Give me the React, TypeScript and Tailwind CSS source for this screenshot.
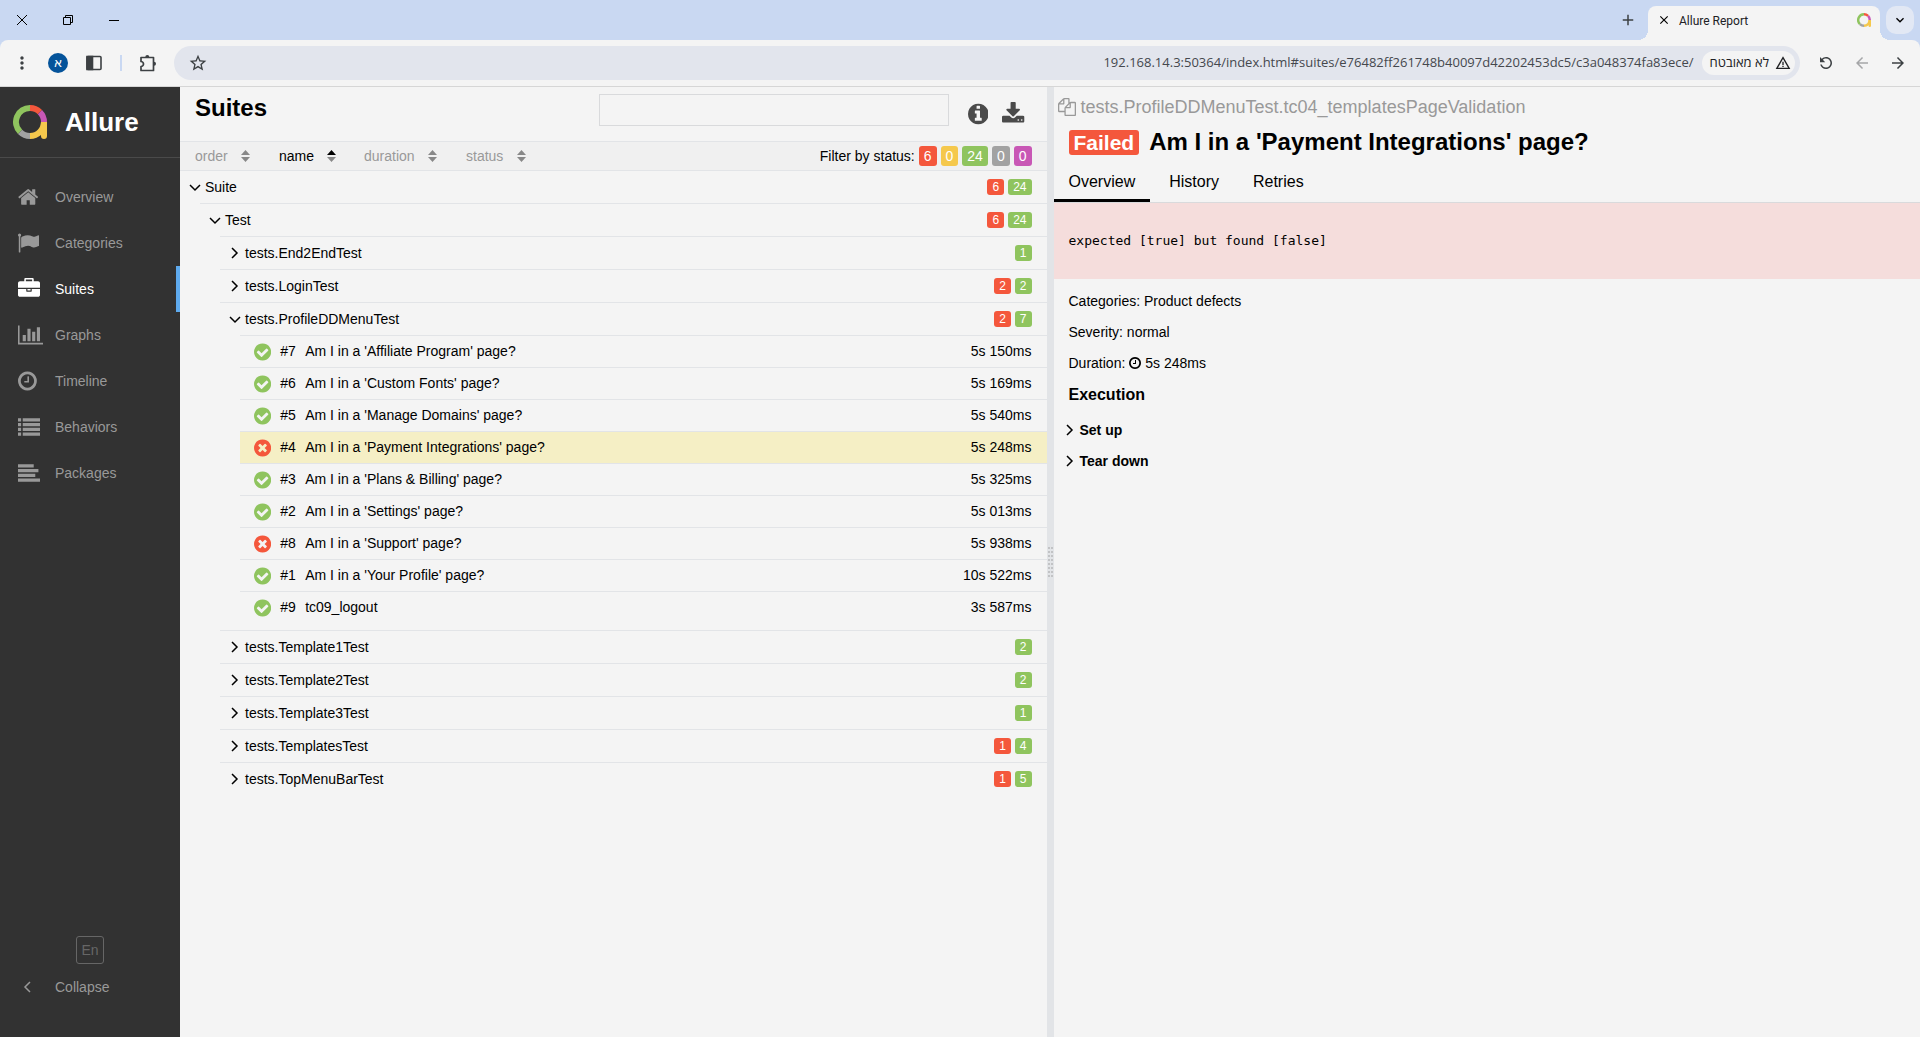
import React from "react";
import {
  MdAdd,
  MdArrowBack,
  MdArrowForward,
  MdClose,
  MdExpandMore,
  MdMoreVert,
  MdRefresh,
  MdStarBorder,
  MdWarningAmber,
} from "react-icons/md";

const RING =
  "q0 209-103 385.5t-279.5 279.5-385.5 103-385.5-103-279.5-279.5-103-385.5 103-385.5 279.5-279.5 385.5-103 385.5 103 279.5 279.5 103 385.5z";

const GLYPHS = {
  home: {
    box: "64 0 1664 1792",
    d: "M1472 992v480q0 26-19 45t-45 19h-384v-384h-256v384h-384q-26 0-45-19t-19-45v-480q0-1 .5-3t.5-3l575-474 575 474q1 2 1 6zm223-69l-62 74q-8 9-21 11h-3q-13 0-21-7l-692-577-692 577q-12 8-24 7-13-2-21-11l-62-74q-8-10-7-23.5t11-21.5l719-599q32-26 76-26t76 26l244 204v-195q0-14 9-23t23-9h192q14 0 23 9t9 23v408l219 182q10 8 11 21.5t-7 23.5z",
  },
  flag: {
    box: "192 0 1728 1792",
    d: "M448 256q0 72-64 110v1266q0 13-9.5 22.5t-22.5 9.5h-64q-13 0-22.5-9.5t-9.5-22.5v-1266q-64-38-64-110 0-53 37.5-90.5t90.5-37.5 90.5 37.5 37.5 90.5zm1472 64v763q0 25-12.5 38.5t-39.5 27.5q-215 116-369 116-61 0-123.5-22t-108.5-48-115.5-48-142.5-22q-192 0-464 146-17 9-33 9-26 0-45-19t-19-45v-742q0-32 31-55 21-14 79-43 236-120 421-120 107 0 200 29t219 88q38 19 88 19 54 0 117.5-21t110-47 88-47 54.5-21q26 0 45 19t19 45z",
  },
  briefcase: {
    box: "0 0 1792 1792",
    d: "M640 256h512v-128h-512v128zm1152 640v480q0 66-47 113t-113 47h-1472q-66 0-113-47t-47-113v-480h672v160q0 26 19 45t45 19h320q26 0 45-19t19-45v-160h672zm-768 0v128h-256v-128h256zm768-480v384h-1792v-384q0-66 47-113t113-47h352v-160q0-40 28-68t68-28h576q40 0 68 28t28 68v160h352q66 0 113 47t47 113z",
  },
  chart: {
    box: "0 0 2048 1792",
    d: "M640 896v512h-256v-512h256zm384-512v1024h-256v-1024h256zm1024 1152v128h-2048v-1536h128v1408h1920zm-640-896v768h-256v-768h256zm384-384v1152h-256v-1152h256z",
  },
  clock: {
    box: "128 0 1536 1792",
    d:
      "M1024 544v448q0 14-9 23t-23 9h-320q-14 0-23-9t-9-23v-64q0-14 9-23t23-9h224v-352q0-14 9-23t23-9h64q14 0 23 9t9 23zm416 352q0-148-73-273t-198-198-273-73-273 73-198 198-73 273 73 273 198 198 273 73 273-73 198-198 73-273zm224 0" +
      RING,
  },
  list: {
    box: "0 0 1792 1792",
    d: "M0 192h256v256h-256zM384 192h1408v256h-1408zM0 576h256v256h-256zM384 576h1408v256h-1408zM0 960h256v256h-256zM384 960h1408v256h-1408zM0 1344h256v256h-256zM384 1344h1408v256h-1408z",
  },
  align: {
    box: "0 0 1792 1792",
    d: "M0 192h1280v256h-1280zM0 576h1664v256h-1664zM0 960h1408v256h-1408zM0 1344h1792v256h-1792z",
  },
  check: {
    box: "128 0 1536 1792",
    d:
      "M1412 734q0-28-18-46l-91-90q-19-19-45-19t-45 19l-408 407-226-226q-19-19-45-19t-45 19l-91 90q-18 18-18 46 0 27 18 45l362 362q19 19 45 19 27 0 46-19l543-543q18-18 18-45zm252 162" +
      RING,
  },
  times: {
    box: "128 0 1536 1792",
    d:
      "M1277 1122q0-26-19-45l-181-181 181-181q19-19 19-45 0-27-19-46l-90-90q-19-19-46-19-26 0-45 19l-181 181-181-181q-19-19-45-19-27 0-46 19l-90 90q-19 19-19 46 0 26 19 45l181 181-181 181q-19 19-19 45 0 27 19 46l90 90q19 19 46 19 26 0 45-19l181-181 181 181q19 19 45 19 27 0 46-19l90-90q19-19 19-46zm387-226" +
      RING,
  },
  info: {
    box: "128 0 1536 1792",
    d:
      "M1152 1376v-160q0-14-9-23t-23-9h-96v-512q0-14-9-23t-23-9h-320q-14 0-23 9t-9 23v160q0 14 9 23t23 9h96v320h-96q-14 0-23 9t-9 23v160q0 14 9 23t23 9h448q14 0 23-9t9-23zm-128-896v-160q0-14-9-23t-23-9h-192q-14 0-23 9t-9 23v160q0 14 9 23t23 9h192q14 0 23-9t9-23zm640 416" +
      RING,
  },
  download: {
    box: "64 0 1664 1792",
    d: "M1344 1344q0-26-19-45t-45-19-45 19-19 45 19 45 45 19 45-19 19-45zm256 0q0-26-19-45t-45-19-45 19-19 45 19 45 45 19 45-19 19-45zm128-224v320q0 40-28 68t-68 28h-1472q-40 0-68-28t-28-68v-320q0-40 28-68t68-28h465l135 136q58 56 136 56t136-56l136-136h464q40 0 68 28t28 68zm-325-569q17 41-14 70l-448 448q-18 19-45 19t-45-19l-448-448q-31-29-14-70 17-39 59-39h256v-448q0-26 19-45t45-19h256q26 0 45 19t19 45v448h256q42 0 59 39z",
  },
  files: {
    box: "0 0 1792 1792",
    d: "M1696 384q40 0 68 28t28 68v1216q0 40-28 68t-68 28h-960q-40 0-68-28t-28-68v-288h-544q-40 0-68-28t-28-68v-672q0-40 20-88t48-76l408-408q28-28 76-48t88-20h416q40 0 68 28t28 68v328q68-40 128-40h416zm-544 213l-299 299h299v-299zm-640-384l-299 299h299v-299zm196 647l316-316v-416h-384v416q0 40-28 68t-68 28h-416v640h512v-256q0-40 20-88t48-76zm956 804v-1152h-384v416q0 40-28 68t-68 28h-416v640h896z",
  },
};

type GlyphName = keyof typeof GLYPHS;

function Glyph({ name, className }: { name: GlyphName; className: string }) {
  return (
    <svg viewBox={GLYPHS[name].box} className={`w-auto shrink-0 ${className}`} fill="currentColor" aria-hidden="true">
      <path d={GLYPHS[name].d} />
    </svg>
  );
}

function AllureLogo({ className }: { className: string }) {
  return (
    <svg viewBox="0 0 34 34" className={`shrink-0 ${className}`} fill="none" strokeWidth="6" aria-hidden="true">
      <path d="M7.100 26.900A14 14 0 0 1 17 3" stroke="#8fc45e" />
      <path d="M17 3A14 14 0 0 1 26.900 7.100" stroke="#f4573c" />
      <path d="M26.900 7.100A14 14 0 0 1 31 17" stroke="#c857b5" />
      <path d="M17 31A14 14 0 0 1 7.100 26.900" stroke="#a2a2a2" />
      <path d="M31 17A14 14 0 0 1 17 31" stroke="#f5c84c" />
      <path d="M34 17v14a3 3 0 0 1-6 0l-1-4 1-10z" fill="#f5c84c" />
    </svg>
  );
}

function Chevron({ dir, className = "" }: { dir: "right" | "down" | "left"; className?: string }) {
  const d = { right: "M3 1l5 5-5 5", down: "M1 4l5 5 5-5", left: "M9 1L4 6l5 5" }[dir];
  return (
    <svg viewBox="0 0 12 12" className={`size-3 shrink-0 ${className}`} fill="none" stroke="currentColor" strokeWidth="1.5" aria-hidden="true">
      <path d={d} />
    </svg>
  );
}

function BrowserChrome() {
  return (
    <header className="bg-[#c9d8f2] text-[#3c4043]">
      <div className="flex h-10 items-end">
        <div className="flex h-10 items-center text-black">
          <button aria-label="Close window" className="flex h-10 w-11 items-center justify-center">
            <svg viewBox="0 0 10 10" className="size-[10px]" stroke="currentColor" fill="none">
              <path d="M0 0l10 10M10 0L0 10" />
            </svg>
          </button>
          <button aria-label="Restore window" className="flex h-10 w-12 items-center justify-center">
            <svg viewBox="0 0 10 10" className="size-[10px]" stroke="currentColor" fill="none">
              <path d="M.5 2.5h7v7h-7zM2.5 2.5v-2h7v7h-2" />
            </svg>
          </button>
          <button aria-label="Minimize window" className="flex h-10 w-11 items-center justify-center">
            <span className="h-px w-[10px] bg-black" />
          </button>
        </div>
        <button aria-label="New tab" className="mr-1.5 ml-auto flex size-7 items-center justify-center self-center">
          <MdAdd className="size-[18px]" />
        </button>
        <div className="relative mr-1.5 flex h-[34px] w-[232px] items-center rounded-t-lg bg-[#f4f4f4] px-[9px]">
          <span className="absolute bottom-0 -left-2.5 size-2.5 bg-[radial-gradient(circle_at_0_0,transparent_10px,#f4f4f4_10px)]" />
          <span className="absolute -right-2.5 bottom-0 size-2.5 bg-[radial-gradient(circle_at_100%_0,transparent_10px,#f4f4f4_10px)]" />
          <button aria-label="Close tab" className="mb-1.5 flex size-[14px] items-center justify-center text-black">
            <MdClose className="size-[14px]" />
          </button>
          <span className="mb-1 ml-2 font-['Roboto',sans-serif] text-[12px] leading-4 text-[#202124]">Allure Report</span>
          <AllureLogo className="mb-1.5 ml-auto size-[14px]" />
        </div>
        <button aria-label="Search tabs" className="mr-1.5 mb-1.5 flex size-7 items-center justify-center rounded-[10px] bg-[#e2e8f4] text-black">
          <MdExpandMore className="size-4" />
        </button>
      </div>
      <div className="flex h-[47px] items-center rounded-t-lg border-b border-[#d6d6d6] bg-[#f4f4f4]">
        <button aria-label="Menu" className="ml-3 flex size-5 items-center justify-center">
          <MdMoreVert className="size-5" />
        </button>
        <button
          aria-label="Profile"
          className="ml-4 flex size-5 items-center justify-center rounded-full bg-[#04539a] font-['Noto_Sans','Liberation_Sans',sans-serif] text-[12px] leading-5 text-white"
        >
          א
        </button>
        <button aria-label="Side panel" className="ml-4 flex size-5 items-center justify-center">
          <svg viewBox="0 0 16 16" className="size-4" fill="none" stroke="currentColor" strokeWidth="1.6">
            <rect x="1" y="1.500" width="14" height="13" rx="1" />
            <path d="M1 1.500h5.500v13H1z" fill="currentColor" />
          </svg>
        </button>
        <span className="ml-4 h-4 w-0.5 bg-[#c9d8f2]" />
        <button aria-label="Extensions" className="ml-4 flex size-5 items-center justify-center">
          <svg viewBox="0 0 18 18" className="size-[18px]" fill="none" stroke="currentColor" strokeWidth="1.7" strokeLinejoin="round">
            <path d="M2 3.500h12.500v13H2V12.500a2.500 2.500 0 0 0 0-5z" />
            <path d="M6.300 3a2 2 0 0 1 4 0zM15 7.800a2 2 0 0 1 0 4z" fill="currentColor" stroke="none" />
          </svg>
        </button>
        <div className="ml-4 flex h-[34px] flex-1 items-center rounded-full bg-[#e2e5ed] pr-[5px] pl-3.5">
          <button aria-label="Bookmark">
            <MdStarBorder className="size-5" />
          </button>
          <input
            aria-label="Address"
            readOnly
            value="192.168.14.3:50364/index.html#suites/e76482ff261748b40097d42202453dc5/c3a048374fa83ece/"
            className="min-w-0 flex-1 bg-transparent pr-2 text-right font-['Open_Sans',sans-serif] text-[13px] text-[#45484d] outline-none"
          />
          <span className="flex h-6 items-center gap-1.5 rounded-full bg-[#f4f4f4] pr-1 pl-2 text-[13px] text-[#202124]">
            <span dir="rtl" className="font-['Open_Sans','Noto_Sans','Liberation_Sans',sans-serif]">
              לא מאובטח
            </span>
            <MdWarningAmber className="size-4" />
          </span>
        </div>
        <button aria-label="Reload" className="ml-4 flex size-5 items-center justify-center">
          <MdRefresh className="size-[18px] -scale-x-100" />
        </button>
        <button aria-label="Back" className="ml-4 flex size-5 items-center justify-center text-[#a5a6a8]">
          <MdArrowBack className="size-[18px]" />
        </button>
        <button aria-label="Forward" className="mr-3 ml-4 flex size-5 items-center justify-center">
          <MdArrowForward className="size-[18px]" />
        </button>
      </div>
    </header>
  );
}

const NAV: { label: string; icon: GlyphName; active?: boolean }[] = [
  { label: "Overview", icon: "home" },
  { label: "Categories", icon: "flag" },
  { label: "Suites", icon: "briefcase", active: true },
  { label: "Graphs", icon: "chart" },
  { label: "Timeline", icon: "clock" },
  { label: "Behaviors", icon: "list" },
  { label: "Packages", icon: "align" },
];

function Sidebar() {
  return (
    <aside className="flex w-[180px] shrink-0 flex-col bg-[#323232] text-[#999]">
      <a href="#" className="flex h-[71px] items-center gap-[18px] border-b border-[#4a4a4a] pl-[13px] text-[26px] font-bold text-white">
        <AllureLogo className="size-[34px]" />
        Allure
      </a>
      <nav className="mt-4">
        {NAV.map((item) => (
          <a
            key={item.label}
            href={`#${item.label.toLowerCase()}`}
            className={`flex h-[46px] items-center pl-[18px] text-[14px] ${
              item.active ? "border-r-4 border-[#5eaaee] text-white" : ""
            }`}
          >
            <span className="flex w-[37px]">
              <Glyph name={item.icon} className="h-[22px]" />
            </span>
            {item.label}
          </a>
        ))}
      </nav>
      <button className="mt-auto size-7 self-center rounded-[3px] border border-[#666] text-[14px] text-[#666]">En</button>
      <button className="mt-2 mb-[35px] flex h-[30px] items-center pl-[21px] text-[14px]">
        <Chevron dir="left" className="mr-[22px]" />
        Collapse
      </button>
    </aside>
  );
}

type Status = "failed" | "broken" | "passed" | "skipped" | "unknown";

const STATUS_BG: Record<Status, string> = {
  failed: "bg-[#f4573c]",
  broken: "bg-[#f5c84c]",
  passed: "bg-[#8fc45e]",
  skipped: "bg-[#a2a2a2]",
  unknown: "bg-[#c857b5]",
};

function Counts({ failed, passed }: { failed?: number; passed?: number }) {
  return (
    <span className="ml-auto flex gap-1 text-[12px] leading-4 text-white">
      {failed !== undefined && <span className={`rounded-[3px] px-[5px] ${STATUS_BG.failed}`}>{failed}</span>}
      {passed !== undefined && <span className={`rounded-[3px] px-[5px] ${STATUS_BG.passed}`}>{passed}</span>}
    </span>
  );
}

type Case = { order: number; name: string; time: string; failed?: boolean; selected?: boolean };
type Group = { name: string; failed?: number; passed?: number; groups?: Group[]; cases?: Case[] };

const TREE: Group = {
  name: "Suite",
  failed: 6,
  passed: 24,
  groups: [
    {
      name: "Test",
      failed: 6,
      passed: 24,
      groups: [
        { name: "tests.End2EndTest", passed: 1 },
        { name: "tests.LoginTest", failed: 2, passed: 2 },
        {
          name: "tests.ProfileDDMenuTest",
          failed: 2,
          passed: 7,
          cases: [
            { order: 7, name: "Am I in a 'Affiliate Program' page?", time: "5s 150ms" },
            { order: 6, name: "Am I in a 'Custom Fonts' page?", time: "5s 169ms" },
            { order: 5, name: "Am I in a 'Manage Domains' page?", time: "5s 540ms" },
            { order: 4, name: "Am I in a 'Payment Integrations' page?", time: "5s 248ms", failed: true, selected: true },
            { order: 3, name: "Am I in a 'Plans & Billing' page?", time: "5s 325ms" },
            { order: 2, name: "Am I in a 'Settings' page?", time: "5s 013ms" },
            { order: 8, name: "Am I in a 'Support' page?", time: "5s 938ms", failed: true },
            { order: 1, name: "Am I in a 'Your Profile' page?", time: "10s 522ms" },
            { order: 9, name: "tc09_logout", time: "3s 587ms" },
          ],
        },
        { name: "tests.Template1Test", passed: 2 },
        { name: "tests.Template2Test", passed: 2 },
        { name: "tests.Template3Test", passed: 1 },
        { name: "tests.TemplatesTest", failed: 1, passed: 4 },
        { name: "tests.TopMenuBarTest", failed: 1, passed: 5 },
      ],
    },
  ],
};

function TreeNode({ group, nested = false }: { group: Group; nested?: boolean }) {
  const open = Boolean(group.groups || group.cases);
  return (
    <li className={nested ? "border-t border-[#e2e4e7]" : ""}>
      <button aria-expanded={open} className="flex h-8 w-full items-center pr-[15px] pl-[9px] text-left">
        <Chevron dir={open ? "down" : "right"} className="mr-1" />
        {group.name}
        <Counts failed={group.failed} passed={group.passed} />
      </button>
      {group.groups && (
        <ul className="ml-5">
          {group.groups.map((child) => (
            <TreeNode key={child.name} group={child} nested />
          ))}
        </ul>
      )}
      {group.cases && (
        <ul className="ml-5 pb-[7px]">
          {group.cases.map((c) => (
            <li key={c.name} className="border-t border-[#e2e4e7]">
              <a
                href={`#case-${c.order}`}
                className={`flex h-[31px] items-center pr-[15px] pl-[14px] ${c.selected ? "bg-[#f5efc5]" : ""}`}
              >
                <Glyph
                  name={c.failed ? "times" : "check"}
                  className={`h-5 ${c.failed ? "text-[#f4573c]" : "text-[#8fc45e]"}`}
                />
                <span className="ml-[9px] w-[25px]">#{c.order}</span>
                <span>{c.name}</span>
                <span className="ml-auto">{c.time}</span>
              </a>
            </li>
          ))}
        </ul>
      )}
    </li>
  );
}

function Sorter({ label, active, className }: { label: string; active?: boolean; className: string }) {
  return (
    <button className={`flex items-center justify-between ${active ? "text-black" : "text-[#999]"} ${className}`}>
      {label}
      <svg viewBox="0 0 9 12" className="h-3 w-[9px]" aria-hidden="true">
        <path d="M0 5L4.500 0L9 5z" fill={active ? "#000" : "#888"} />
        <path d="M0 7L4.500 12L9 7z" fill="#888" />
      </svg>
    </button>
  );
}

const FILTERS: { status: Status; count: number }[] = [
  { status: "failed", count: 6 },
  { status: "broken", count: 0 },
  { status: "passed", count: 24 },
  { status: "skipped", count: 0 },
  { status: "unknown", count: 0 },
];

function SuitesPane() {
  return (
    <section className="min-w-0 flex-1 text-[14px]">
      <div className="flex h-[54px] items-start pr-[22px] pl-[15px]">
        <h1 className="mt-1.5 text-[24px] leading-[30px] font-bold">Suites</h1>
        <input
          aria-label="Search"
          type="text"
          className="mt-[7px] ml-auto h-8 w-[350px] border border-[#d9dadc] bg-transparent px-2 outline-none"
        />
        <button aria-label="Info" className="mt-[15px] ml-[19px] text-[#4a4a4a]">
          <Glyph name="info" className="h-6" />
        </button>
        <button aria-label="Download" className="mt-[15px] ml-3.5 text-[#4a4a4a]">
          <Glyph name="download" className="h-6" />
        </button>
      </div>
      <div className="flex h-[30px] items-center border-y border-[#e2e4e7] bg-[#f0f0f0] pr-[15px] pl-[15px]">
        <Sorter label="order" className="mr-[29px] w-[55px]" />
        <Sorter label="name" active className="mr-7 w-[57px]" />
        <Sorter label="duration" className="mr-[29px] w-[73px]" />
        <Sorter label="status" className="w-[60px]" />
        <span className="mr-1 ml-auto">Filter by status:</span>
        <span className="flex gap-1 text-[14px] leading-5 text-white">
          {FILTERS.map((f) => (
            <button key={f.status} aria-label={`${f.status}: ${f.count}`} className={`rounded-[3px] px-[5px] ${STATUS_BG[f.status]}`}>
              {f.count}
            </button>
          ))}
        </span>
      </div>
      <ul>
        <TreeNode group={TREE} />
      </ul>
    </section>
  );
}

function Splitter() {
  return (
    <div className="flex w-[7px] shrink-0 items-center justify-center bg-[#e2e4e7]">
      <div className="grid grid-cols-2 gap-x-px gap-y-0.5">
        {Array.from({ length: 16 }, (_, i) => (
          <span key={i} className="size-0.5 bg-[#c2c3c5]" />
        ))}
      </div>
    </div>
  );
}

const TABS = ["Overview", "History", "Retries"];

function DetailPane() {
  return (
    <section className="min-w-0 flex-1 text-[14px]">
      <div className="flex items-center gap-[5px] pt-2 pl-1 text-[18px] leading-6 text-[#999]">
        <Glyph name="files" className="h-[18px]" />
        tests.ProfileDDMenuTest.tc04_templatesPageValidation
      </div>
      <div className="mt-2 flex items-center gap-2.5 px-[15px]">
        <span className="rounded-[3px] bg-[#f4573c] px-[5px] text-[21px] leading-[25px] font-bold text-white">Failed</span>
        <h2 className="text-[24px] leading-[30px] font-bold">Am I in a &#39;Payment Integrations&#39; page?</h2>
      </div>
      <div className="mt-2 flex gap-1 border-b border-[#d9dadc] text-[16px]" role="tablist">
        {TABS.map((tab, i) => (
          <button
            key={tab}
            role="tab"
            aria-selected={i === 0}
            className={`h-[37px] border-b-[3px] px-[15px] ${i === 0 ? "border-black" : "border-transparent"}`}
          >
            {tab}
          </button>
        ))}
      </div>
      <pre className="bg-[#f5dddc] px-[15px] py-7 font-['DejaVu_Sans_Mono',monospace] text-[13px] leading-5">
        expected [true] but found [false]
      </pre>
      <div className="flex flex-col gap-[11px] px-[15px] pt-3 leading-5">
        <p>Categories: Product defects</p>
        <p>Severity: normal</p>
        <p className="flex items-center gap-1">
          Duration: <Glyph name="clock" className="h-[14px]" /> 5s 248ms
        </p>
      </div>
      <h3 className="mt-3 px-[15px] text-[16px] leading-5 font-bold">Execution</h3>
      <div className="mt-[15px] flex flex-col items-start gap-[11px] pl-2.5 leading-5 font-bold">
        <button className="flex items-center gap-1">
          <Chevron dir="right" />
          Set up
        </button>
        <button className="flex items-center gap-1">
          <Chevron dir="right" />
          Tear down
        </button>
      </div>
    </section>
  );
}

export default function App() {
  return (
    <div className="flex min-h-screen flex-col bg-[#f4f4f4] font-['Liberation_Sans',Arial,sans-serif] text-black">
      <BrowserChrome />
      <main className="flex flex-1">
        <Sidebar />
        <SuitesPane />
        <Splitter />
        <DetailPane />
      </main>
    </div>
  );
}
